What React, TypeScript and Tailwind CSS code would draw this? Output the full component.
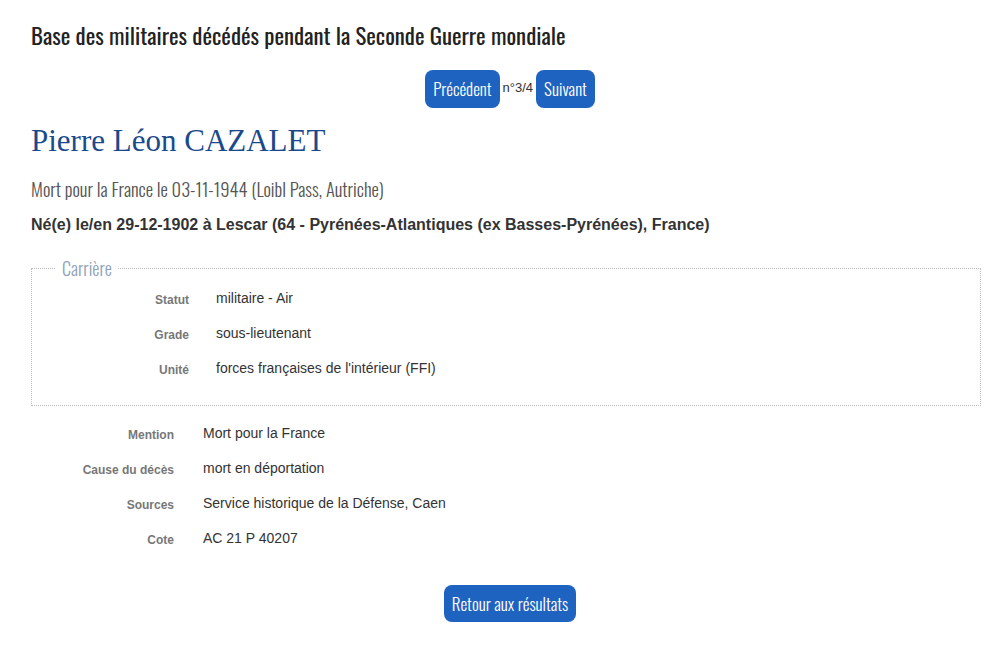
import React from "react";

const cond = { fontFamily: '"Oswald", "Liberation Sans Narrow", "DejaVu Sans Condensed", "Roboto Condensed", sans-serif' };

function Row({ label, value, labelW, gap }: { label: string; value: string; labelW: string; gap: string }) {
  return (
    <div className="flex items-center h-[35px]">
      <div className={`${labelW} text-right text-[12px] font-bold text-[#777] pt-[3px]`}>{label}</div>
      <div className={`${gap} text-[14px] text-[#333]`}>{value}</div>
    </div>
  );
}

export default function App() {
  return (
    <div className="bg-white min-h-[647px] pl-[31px] pr-[11px] pt-[20px] text-[#333]" style={{ fontFamily: '"Liberation Sans", Arial, sans-serif' }}>
      <h1 className="text-[22.8px] leading-[30px] text-[#222]" style={cond}>
        Base des militaires décédés pendant la Seconde Guerre mondiale
      </h1>
      <div className="flex justify-center items-center mt-[20px] gap-[3px]">
        <button className="h-[38px] px-[8px] rounded-[8px] bg-[#1f63c1] text-white text-[17px] font-light" style={cond}>Précédent</button>
        <span className="text-[13px] text-[#333] -mt-[3px]">n°3/4</span>
        <button className="h-[38px] px-[8px] rounded-[8px] bg-[#1f63c1] text-white text-[17px] font-light" style={cond}>Suivant</button>
      </div>
      <h2 className="mt-[14px] text-[31px] leading-[38px] text-[#1a4a8c]" style={{ fontFamily: '"Liberation Serif", "Times New Roman", serif' }}>
        Pierre Léon CAZALET
      </h2>
      <p className="mt-[17px] text-[18.5px] leading-[24px] text-[#555] font-light" style={cond}>
        Mort pour la France le 03-11-1944 (Loibl Pass, Autriche)
      </p>
      <p className="mt-[13px] text-[16px] font-bold leading-[22px] text-[#333]">
        Né(e) le/en 29-12-1902 à Lescar (64 - Pyrénées-Atlantiques (ex Basses-Pyrénées), France)
      </p>
      <fieldset className="mt-[21px] mr-[8px] border border-dotted border-[#bbb] pb-[19px]">
        <legend className="ml-[24px] px-[6px] text-[18px] leading-[22px] text-[#8fa3b8] font-light" style={cond}>Carrière</legend>
        <div className="mt-[2px]">
          <Row label="Statut" value="militaire - Air" labelW="w-[157px]" gap="ml-[27px]" />
          <Row label="Grade" value="sous-lieutenant" labelW="w-[157px]" gap="ml-[27px]" />
          <Row label="Unité" value="forces françaises de l'intérieur (FFI)" labelW="w-[157px]" gap="ml-[27px]" />
        </div>
      </fieldset>
      <div className="mt-[10px]">
        <Row label="Mention" value="Mort pour la France" labelW="w-[143px]" gap="ml-[29px]" />
        <Row label="Cause du décès" value="mort en déportation" labelW="w-[143px]" gap="ml-[29px]" />
        <Row label="Sources" value="Service historique de la Défense, Caen" labelW="w-[143px]" gap="ml-[29px]" />
        <Row label="Cote" value="AC 21 P 40207" labelW="w-[143px]" gap="ml-[29px]" />
      </div>
      <div className="flex justify-center mt-[29px]">
        <button className="h-[37px] px-[8px] rounded-[8px] bg-[#1f63c1] text-white text-[17px] font-light" style={cond}>Retour aux résultats</button>
      </div>
    </div>
  );
}
